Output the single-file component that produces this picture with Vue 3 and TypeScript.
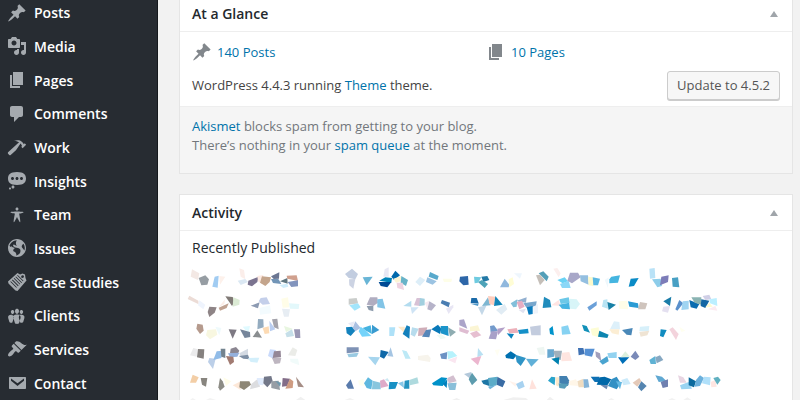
<script setup lang="ts">
interface MenuItem {
  label: string
  icon: string
}

interface ShardGroup {
  x: number
  y: number
  shards: string
}

interface Shard {
  fill: string
  points: string
}

const pin =
  'M10.44 3.02l1.82-1.82 6.36 6.35-1.83 1.82c-1.05-.68-2.48-.57-3.41.36l-.75.75c-.92.93-1.04 2.35-.35 3.41l-1.83 1.82-2.41-2.41-2.8 2.79c-.42.42-3.38 2.71-3.8 2.29s1.86-3.39 2.28-3.81l2.79-2.79L4.1 9.36l1.83-1.82c1.05.69 2.48.57 3.4-.36l.75-.75c.93-.92 1.05-2.35.36-3.41z'
const pages = 'M6 15V2h10v13H6zm-1 1h8v2H3V5h2v11z'

const menu: MenuItem[] = [
  { label: 'Posts', icon: pin },
  {
    label: 'Media',
    icon: 'M13 11V4c0-.55-.45-1-1-1h-1.67L9 1H5L3.67 3H2c-.55 0-1 .45-1 1v7c0 .55.45 1 1 1h10c.55 0 1-.45 1-1zM7 4.5c1.38 0 2.5 1.12 2.5 2.5S8.38 9.5 7 9.5 4.5 8.38 4.5 7 5.62 4.5 7 4.5zM14 6h5v10.5c0 1.38-1.12 2.5-2.5 2.5S14 17.88 14 16.5s1.12-2.5 2.5-2.5c.17 0 .34.02.5.05V9h-3V6zm-4 8.05V13h2v3.5c0 1.38-1.12 2.5-2.5 2.5S7 17.88 7 16.5 8.12 14 9.5 14c.17 0 .34.02.5.05z',
  },
  { label: 'Pages', icon: pages },
  {
    label: 'Comments',
    icon: 'M5 2h9c1.1 0 2 .9 2 2v7c0 1.1-.9 2-2 2h-2l-5 5v-5H5c-1.1 0-2-.9-2-2V4c0-1.1.9-2 2-2z',
  },
  {
    label: 'Work',
    icon: 'M17.7 6.32l1.41 1.42-3.47 3.41-1.42-1.42.84-.82c-.32-.76-.81-1.57-1.51-2.31l-4.61 6.59-5.26 4.7c-.39.39-1.02.39-1.42 0l-1.2-1.21c-.39-.39-.39-1.02 0-1.41l10.97-9.92c-1.37-.86-3.21-1.46-5.67-1.48 2.7-.82 4.95-.93 6.58-.3 1.7.66 2.82 2.2 3.91 3.58z',
  },
  {
    label: 'Insights',
    icon: 'M10 1c7 0 9 2.91 9 6.5S17 14 10 14s-9-2.91-9-6.5S3 1 10 1zM5.5 9C6.33 9 7 8.33 7 7.5S6.33 6 5.5 6 4 6.67 4 7.5 4.67 9 5.5 9zM10 9c.83 0 1.5-.67 1.5-1.5S10.83 6 10 6s-1.5.67-1.5 1.5S9.17 9 10 9zm4.5 0c.83 0 1.5-.67 1.5-1.5S15.33 6 14.5 6 13 6.67 13 7.5 13.67 9 14.5 9zM6 14.5c.83 0 1.5.67 1.5 1.5s-.67 1.5-1.5 1.5-1.5-.67-1.5-1.5.67-1.5 1.5-1.5zm-3 2c.55 0 1 .45 1 1s-.45 1-1 1-1-.45-1-1 .45-1 1-1z',
  },
  {
    label: 'Team',
    icon: 'M10 2.6c.83 0 1.5.67 1.5 1.5s-.67 1.51-1.5 1.51c-.82 0-1.5-.68-1.5-1.51s.68-1.5 1.5-1.5zM3.4 7.36c0-.65 6.6-.76 6.6-.76s6.6.11 6.6.76-4.47 1.4-4.47 1.4 1.69 8.14 1.06 8.38c-.62.24-3.19-5.19-3.19-5.19s-2.56 5.43-3.18 5.19c-.63-.24 1.06-8.38 1.06-8.38S3.4 8.01 3.4 7.36z',
  },
  {
    label: 'Issues',
    icon: 'M10 1C5.03 1 1 5.03 1 10s4.03 9 9 9 9-4.03 9-9-4.03-9-9-9zm3.46 11.95c0 1.47-.8 3.3-4.06 4.7.3-4.17-2.52-3.69-3.2-5 .126-1.1.804-2.063 1.8-2.55-1.552-.266-3-.96-4.18-2 .05.47.28.904.64 1.21-.782-.295-1.458-.817-1.94-1.5.977-3.225 3.883-5.482 7.25-5.63-.84 1.38-1.5 4.13 0 5.57C8.23 8 7.26 6 6.41 6.79c-1.13 1.06.33 2.51 3.42 3.08 3.29.59 3.66 1.58 3.63 3.08zm1.34-4c-.32-1.11.62-2.23 1.69-3.14 1.356 1.955 1.67 4.45.84 6.68-.77-1.89-2.17-2.32-2.53-3.57z',
  },
  {
    label: 'Case Studies',
    icon: 'M1 9.500L10.500 1l2.500 1.500 2.500-1 2.500 1 .5 3.500 1 2.500L10.500 19 8.500 18.500 1.500 11.500zM3.300 9.800l6 6 .6-.6-6-6zM5 8.200l6 6 .6-.6-6-6zM6.700 6.600l6 6 .6-.6-6-6zM8.400 5l6 6 .6-.6-6-6zM10.100 3.500l5.800 5.800.6-.6-5.800-5.800zM15.500 3.200a1.400 1.400 0 1 0 .1 2.800 1.400 1.400 0 0 0-.1-2.800z',
  },
  {
    label: 'Clients',
    icon: 'M8.03 4.46c-.29 1.28.55 3.46 1.97 3.46 1.41 0 2.25-2.18 1.96-3.46-.22-.98-1.08-1.63-1.96-1.63-.89 0-1.74.65-1.97 1.63zm-4.13.9c-.25 1.08.47 2.93 1.67 2.93s1.92-1.85 1.67-2.93c-.19-.83-.92-1.39-1.67-1.39s-1.48.56-1.67 1.39zm8.86 0c-.25 1.08.47 2.93 1.66 2.93 1.2 0 1.92-1.85 1.67-2.93-.19-.83-.92-1.39-1.67-1.39-.74 0-1.47.56-1.66 1.39zm-.59 11.43l1.25-4.3C14.2 10 12.71 8.47 10 8.47c-2.72 0-4.21 1.53-3.44 4.02l1.26 4.3C8.05 17.51 9 18 10 18c.98 0 1.94-.49 2.17-1.21zm-6.1-7.63c.49.67.96 1.83.42 3.59l-1.12 3.79c-.34.2-.77.31-1.2.31-.85 0-1.65-.41-1.85-1.03l-1.07-3.65c-.65-2.11.61-3.4 2.92-3.4.27 0 .54.02.79.06-.1.1-.2.22-.3.33zm8.35-.39c2.31 0 3.58 1.29 2.92 3.4l-1.07 3.65c-.2.62-1 1.03-1.85 1.03-.43 0-.86-.11-1.2-.31l-1.11-3.77c-.55-1.78-.08-2.94.42-3.61-.1-.11-.2-.23-.3-.33.25-.04.51-.06.79-.06z',
  },
  {
    label: 'Services',
    icon: 'M14.48 11.06L7.41 3.99l1.5-1.5c.5-.56 2.3-.47 3.51.32 1.21.8 1.43 1.28 2.91 2.1 1.18.64 2.45 1.26 4.45.85zm-.71.71L6.7 4.7 4.93 6.47c-.39.39-.39 1.02 0 1.41l1.06 1.06c.39.39.39 1.03 0 1.42-.6.6-1.43 1.11-2.21 1.69-.35.26-.7.53-1.01.84C1.43 14.23.4 16.08 1.4 17.07c.99 1 2.84-.03 4.18-1.36.31-.31.58-.66.85-1.02.57-.78 1.08-1.61 1.69-2.21.39-.39 1.02-.39 1.41 0l1.06 1.06c.39.39 1.02.39 1.41 0z',
  },
  {
    label: 'Contact',
    icon: 'M3 4h15c.6 0 1 .4 1 1v10c0 .6-.4 1-1 1H3c-.6 0-1-.4-1-1V5c0-.6.4-1 1-1zM4 5.500v2.200l6.500 5.300L17 7.700V5.500l-6.500 4.800z',
  },
]

// Mosaic of the recent posts: each line is a fill and the corners of one shard,
// in thirds of a pixel from the origin of its group.
const groups: ShardGroup[] = [
  {
    x: 170,
    y: 160,
    shards: `#f3e8e4 66,328 88,340 84,360 62,350
#969da3 86,354 106,346 117,358 112,374 94,376
#a1ccf2 134,350 146,347 143,383 127,380
#fdf1eb 148,348 166,350 150,374
#fbeeea 208,325 222,330 226,358 212,350
#dbe8f3 203,362 226,357 234,366 212,375
#7b7490 235,362 266,350 262,366 246,379 233,374
#fdeae2 262,348 280,345 276,372 264,364
#c4a58c 276,349 303,352 299,366 286,378 270,368
#6b7692 303,349 328,337 327,356 311,357
#7295b7 303,357 325,357 334,372 309,369
#607680 330,364 352,354 353,371
#d0edfb 328,375 352,371 355,380 340,384
#d0a08e 350,347 380,346 384,363 352,356
#8294bd 353,366 384,361 384,379 364,381
#ecdcd6 58,407 85,422 86,433 53,417
#eff4fd 88,421 106,434 100,448 84,436
#8e8486 118,440 140,442 134,458 118,471 113,456
#fceee8 165,418 163,433 147,440
#c0a291 146,443 176,430 170,444 150,452
#807a76 166,409 188,411 194,427 186,438
#dcebd5 190,412 209,420 208,434 188,440
#8c9ab2 242,437 269,427 264,445
#c4cfea 272,414 290,412 300,432 278,434 266,424
#f3fbfe 268,444 300,436 304,460 270,464
#fffde8 334,416 354,412 358,442 338,443
#e3f8fb 357,430 388,432 386,447 360,446
#e7edf3 336,446 360,448 356,470 342,470
#b59a8d 82,491 98,494 101,512 90,522 79,506
#f8f7e0 112,510 138,508 142,524 120,538 108,526
#effafc 136,500 154,504 148,526
#7d7983 176,508 200,509 188,536
#e0faff 218,500 240,498 236,516 226,510
#76869b 210,508 240,516 241,531 224,534
#8a8e90 262,511 276,533 248,531
#94acc0 264,477 280,478 281,502 262,508
#fddbb4 278,504 296,499 298,520 284,522
#b9cdf0 298,482 316,508 300,514
#a4a3ab 306,478 322,476 326,508 312,502
#e8f6e0 342,498 368,506 348,516
#c6dfe9 346,520 366,508 372,528 350,532
#9a97b4 372,508 390,508 391,534 376,534
#ebebec 70,564 84,568 80,590 60,586
#85817f 84,567 103,568 101,596 81,592
#bccfe8 118,594 137,596 129,627 114,606
#91bce8 140,574 158,572 154,594 130,600
#73838f 152,566 166,566 166,594 154,590
#8b8691 182,566 198,561 208,572 202,584 180,580
#94b0dc 174,580 208,578 202,590 180,592
#a17b72 168,588 190,590 192,606 180,615
#d3dae3 208,580 234,566 234,584 212,588
#7d8fa5 206,588 234,584 239,598 220,596
#d3effb 234,594 268,593 262,608 242,606
#c9dafb 300,568 318,570 310,596 294,588
#948797 312,574 332,572 333,592 308,594
#beb6c0 306,594 334,594 330,610 314,612
#ebece8 354,586 368,562 382,570 376,588
#f1fbfa 360,596 384,596 388,616 362,606
#f3cea6 68,644 86,652 78,668 60,668
#88857f 92,654 112,654 108,680 96,674
#8d8c85 150,654 158,664 164,680 150,692 145,682
#fffde9 160,652 184,664 168,678
#fde8d8 188,676 212,664 212,690
#8e8776 210,664 238,664 243,674 222,690 208,682
#dcdde0 244,672 264,656 270,680 240,688
#e0ebfc 260,654 282,654 280,676 266,674
#737889 282,650 304,648 308,664 292,682 280,670
#969da5 304,664 326,662 330,690 304,684
#6f98ac 316,662 333,668 330,680
#836d88 338,654 360,656 352,678 336,680
#cf9c82 360,656 370,664 368,684 346,686
#a58d85 378,650 402,682 384,680
#f3f3f3 60,720 68,714 78,720
#f3f3f3 108,720 120,714 138,720
#f0f0f0 378,720 392,710 406,720`,
  },
  {
    x: 340,
    y: 260,
    shards: `#c2cde0 15,42 36,26 54,42 46,58 26,54
#ccd3e3 27,58 46,57 40,86 28,76
#69b5d6 68,52 98,50 80,76
#e8e8f4 134,28 146,22 146,50 130,50
#0083b8 118,62 136,52 156,54 154,68
#004a94 116,66 154,66 142,82 122,78
#0069ac 154,50 166,32 180,46 162,60
#fdf5d4 160,56 184,48 182,64 168,68
#68b3c8 184,48 204,60 198,78 182,68
#eed3e0 170,68 188,68 192,90 172,84
#ddeef8 226,66 240,50 256,60 240,78
#58a9cc 270,36 296,48 292,60 266,50
#9bc3e2 262,52 290,64 278,74 258,66
#fefee8 308,56 336,56 334,66 312,66
#2d66a8 360,50 384,48 386,74 370,76 358,64
#e0ecf4 32,122 54,124 48,142
#cacdcb 26,116 50,114 54,130 26,134
#a2e5fb 28,136 54,130 62,142 44,152
#b0adc0 90,112 112,112 114,128 100,138 80,134
#8e9cad 80,138 100,138 100,154 86,150
#82c4e6 112,118 128,116 136,146 112,142
#b3dcef 190,138 214,122 214,140
#cfe4f5 212,142 236,142 216,162
#d7c1d5 230,114 240,114 240,138 222,136
#a2cfdf 240,114 254,116 254,136 238,138
#f6eaf2 254,128 268,122 262,146
#b6b3c9 268,124 288,136 274,152 262,148
#4a7db2 306,120 330,128 326,142 302,130
#e8e6f4 318,146 340,134 340,142 326,162
#1482bd 18,202 36,200 46,212 32,228 20,220
#e8eaf6 24,190 44,184 38,202
#abc0e2 46,184 62,204 46,214 38,204
#74d3fa 62,200 78,212 94,228 66,230 56,214
#46b3e0 68,204 92,196 96,222 78,212
#399bd0 96,194 118,210 96,222
#aee1f8 148,202 166,202 162,228 148,228
#fde9cb 174,200 194,200 196,222
#1480bc 200,196 210,200 208,236 188,222
#b7dced 216,202 236,206 224,230 212,224
#cfadb8 236,204 262,202 256,226 234,228
#5686b9 258,210 274,208 268,232 246,230
#0878b8 274,208 294,194 304,206 300,222
#1b94ca 302,198 324,198 326,228 302,220
#8eacb1 324,202 348,216 330,230
#eefaf4 290,226 304,222 318,234 302,238
#aba4c9 358,180 372,178 382,206 358,196
#dfbdd2 358,202 388,212 382,222 358,214
#7e92b5 20,262 56,262 56,276 20,280
#9acae2 22,282 56,278 50,290 26,292
#a6d5ee 84,290 120,292 106,316
#0e68a8 122,270 146,276 132,296 120,290
#a5c5e3 152,262 160,290 142,288
#bde9f6 186,270 200,274 212,296 196,296
#f7f4ec 234,288 264,284 272,294 270,306 234,300
#6c92c4 300,282 322,276 320,298 304,296
#b6f2fc 322,274 338,274 352,288 324,298
#fae6f0 324,300 352,290 346,310
#5a7bac 18,376 32,358 42,386 24,386
#fffff0 54,362 70,356 74,378 58,376
#5fb8df 72,370 84,352 98,362 94,388 80,384
#88c6de 98,362 122,368 122,388 96,388
#deaac9 120,362 132,358 146,378 122,384
#cbe8f2 134,360 142,354 150,366
#1890c4 148,366 174,366 166,386 146,388
#86c7e8 174,370 190,364 192,384
#2493c0 194,362 208,360 208,386 192,386
#aedade 208,360 232,352 236,370 210,376
#0091c9 276,370 304,352 322,354 308,378 280,376
#d3bfcf 322,354 340,346 350,364 326,370
#0080bd 308,372 322,358 320,384
#8abfd9 322,370 350,368 346,390 328,390
#b3c8da 372,342 394,336 396,360
#5d9cae 386,358 396,338 412,360 396,376
#f2f2f2 14,420 30,414 44,420
#f0f0f0 336,420 350,414 362,420`,
  },
  {
    x: 470,
    y: 260,
    shards: `#6fcbe0 12,50 34,52 24,68 14,70
#2379a6 34,50 52,48 58,60 40,66
#4ea3b8 24,66 36,60 54,72 44,84
#90b8dd 104,56 118,74 116,82 90,82
#fffdd5 116,58 128,52 132,72 118,82
#eef6fd 132,40 156,40 150,56
#539fb8 206,40 220,34 236,50 230,64
#c5bfb9 198,46 210,44 224,60 210,76
#fcefee 250,26 262,24 272,40 266,52
#69d2f4 262,60 284,52 294,64 278,70
#8bd7f7 270,72 296,62 302,84 276,84
#a8a7c8 300,38 324,38 332,52 306,70 292,62
#94bfe0 330,46 354,46 356,74 332,64
#fdfacc 354,50 368,52 370,78 356,76
#5bb8e3 368,52 390,56 384,76 370,76
#1b6aa8 4,114 20,114 26,130 2,130
#5098c8 4,132 26,130 24,138
#c4d8e8 24,142 50,136 36,166
#7eb7d2 36,138 54,112 62,136
#ffcdbd 54,108 76,110 72,136 58,132
#1285b8 76,108 98,134 72,138
#e1ecf4 78,150 104,132 112,148 94,164
#83bfda 122,130 142,118 140,140 130,142
#92b0d0 140,122 170,112 168,128 148,126
#e6adc2 140,126 156,122 164,140 148,148
#78a7cd 160,130 200,124 198,138 170,144
#0a7cbe 170,142 188,138 188,162 176,164
#e0e2f0 146,150 168,146 160,160
#eef3fa 190,140 204,132 204,160 190,162
#208cbc 222,110 240,120 244,142 218,144
#ffe4e2 244,136 266,120 272,138
#6cc8e8 268,118 296,112 300,128 272,132
#45b4e2 266,134 298,128 300,148 276,146
#d8f5f8 298,116 320,118 330,132 318,148 300,146
#6ba0d8 352,142 380,124 380,136 358,152
#fbf5d4 0,200 24,196 30,212 0,214
#e6bfd0 0,220 20,212 34,226 12,234
#739acb 60,198 72,196 84,212 62,218
#a8a0c8 64,214 84,214 78,238 56,236
#b3a0c8 82,206 106,202 84,226
#ecb0ba 112,208 140,204 146,218 118,220
#0a82bd 110,220 132,222 124,236
#1490c8 144,210 174,206 176,220 148,222
#c3ccde 180,200 212,196 212,226 184,226
#0093cb 238,206 248,198 252,226 240,222
#86d2f2 274,200 294,196 302,222 276,224
#1290b8 336,194 350,198 360,218 342,212
#fdfdd5 362,206 386,202 388,232 366,226
#0d85b0 388,212 416,224 412,234 384,230
#b8e0f2 24,264 40,284 22,292
#ecb6cf 2,296 34,288 24,316
#fffef2 74,270 90,268 82,288
#0070b0 106,286 122,274 140,286 130,298 108,294
#2f94c6 136,284 168,294 152,318 140,306
#60b0d8 168,296 206,298 184,320
#eef6f2 200,264 222,260 226,284 208,284
#68a8d0 232,268 252,268 252,290 232,294
#a0b0bc 250,272 276,272 272,300 256,296
#0081af 244,296 268,292 266,314
#fee5e0 276,278 298,276 306,302 274,304
#3f72b4 324,264 340,264 344,282 326,286
#5590d4 344,266 374,266 366,290 344,286
#a29fbc 376,274 390,280 394,304 378,290
#4aa4d0 388,304 412,288 416,304 398,314
#1c76a5 34,362 60,356 58,378 40,372
#5cacc8 54,354 82,350 80,376 58,380
#3a6ca4 82,350 106,364 98,382 80,374
#6eb2d8 54,380 78,376 60,388
#fff3ec 116,362 140,370 136,380
#a8d2f0 138,372 158,362 164,380 146,388
#ffe2dc 178,388 186,358 200,386
#2aa4cc 234,362 244,350 256,352 254,376
#fde8c8 256,352 268,352 266,380 258,376
#4280b0 268,348 290,348 298,362 294,378 268,370
#569cb8 266,370 296,372 284,386 268,384
#fff6e8 296,364 318,358 326,378 300,376
#f0dcc0 322,364 340,356 342,382 326,382
#86b4d8 340,358 354,358 358,382 342,384
#0d70b4 362,350 388,350 394,366 374,366
#f0f0f0 100,420 130,412 168,414 174,420
#f0f0f0 230,420 240,410 252,420`,
  },
  {
    x: 600,
    y: 260,
    shards: `#45b5e0 28,58 34,50 60,46 54,68 28,70
#eff8fc 14,60 26,52 24,84
#0a8bc6 92,56 116,54 102,78 86,80
#b9e2f7 148,26 164,24 166,54 150,56
#8dcdea 156,58 182,56 186,78 172,82
#7c7cb8 184,50 206,46 204,66 180,76
#48a0c4 216,54 234,52 238,82 218,80
#b8e4f4 10,120 22,118 24,146 6,140
#1880a6 22,126 48,134 26,150
#fffde8 56,124 82,122 84,148 58,146
#2a9bd4 84,124 114,130 116,144 88,140
#cfc4bd 120,126 142,130 136,148 114,148
#1a7ca8 214,110 210,138 190,124
#e4e0f0 190,140 210,138 204,158 186,154
#5a90cc 226,148 238,120 250,130 232,152
#9fd4f2 248,124 266,122 266,148 244,150
#0a6cb0 268,120 298,132 290,146 272,142
#8ab3b2 274,112 304,112 304,134 284,128
#1467a4 304,118 328,122 316,144 302,138
#d0cfe6 308,108 328,104 334,118 316,120
#bcefff 328,118 350,114 352,138 330,130
#fffad0 316,142 328,128 338,140
#fbeaf0 324,148 346,138 352,152
#ddf0fa 42,184 58,186 60,208 30,208
#fceed4 28,208 58,208 56,224 36,220
#4a88b8 66,210 98,204 94,226 80,224
#d7f0fa 120,200 148,198 146,214 118,214
#efe4d4 118,216 148,212 142,226 122,230
#118cc0 182,208 200,210 190,232 180,228
#f3d3dc 208,208 218,202 236,222 228,240
#fffff0 238,200 256,212 244,216
#92d2f0 22,280 50,276 50,294 26,294
#006fb8 54,292 88,292 68,312
#dcf0de 76,274 90,290 62,292
#7a8ab8 92,290 106,272 118,290 106,300
#5fb2d4 148,300 166,288 168,312 152,312
#86a8c2 166,292 180,286 190,300 170,310
#0068a8 0,352 14,350 34,358 22,376 -10,374
#3290c4 34,358 50,350 62,370 50,388 24,378
#6a88b0 0,374 24,376 20,388
#63b8e2 48,364 66,366 60,388
#cbeafa 64,360 82,354 92,372 70,376
#e4c9b8 98,368 118,354 124,364 112,380
#5585b0 124,364 140,378 124,394 114,382
#60a8d2 166,346 186,350 200,364 176,366
#6f80b0 182,366 204,358 204,380 188,384
#e8d5e2 234,346 250,352 260,368 240,368
#9ad4f2 240,376 266,366 276,386 244,388
#0b6a9e 266,352 288,364 282,382 266,376
#6bb0dc 288,360 300,346 312,354 300,378 284,380
#b0e0fa 312,350 332,352 330,376 306,370
#ffe6e2 332,366 346,360 350,380 334,382
#60b0c0 340,354 354,350 362,360 352,374
#f2f2f2 24,420 34,414 44,420
#f2f2f2 204,420 216,414 228,420
#f2f2f2 250,420 262,412 274,420`,
  },
]

const parseShards = (source: string): Shard[] =>
  source.split('\n').map((line) => {
    const [fill, ...corners] = line.split(' ')
    return { fill, points: corners.join(' ') }
  })

const mosaic = groups.map((group) => ({
  transform: `translate(${group.x} ${group.y}) scale(${1 / 3})`,
  shards: parseShards(group.shards),
}))
</script>

<template>
  <div class="admin">
    <nav class="sidebar">
      <a v-for="item in menu" :key="item.label" class="menu-item" href="#">
        <svg class="icon" viewBox="0 0 20 20" aria-hidden="true">
          <path :d="item.icon" fill-rule="evenodd" />
        </svg>
        <span>{{ item.label }}</span>
      </a>
    </nav>

    <main class="content">
      <section class="card glance">
        <header class="card-head">
          <h2>At a Glance</h2>
          <button class="toggle" type="button" aria-label="Toggle At a Glance">
            <svg viewBox="0 0 8 6" aria-hidden="true"><path d="M4 0l4 6H0z" /></svg>
          </button>
        </header>
        <div class="counts">
          <a class="count" href="#">
            <svg class="icon" viewBox="0 0 20 20" aria-hidden="true"><path :d="pin" /></svg>
            <span>140 Posts</span>
          </a>
          <a class="count" href="#">
            <svg class="icon" viewBox="0 0 20 20" aria-hidden="true"><path :d="pages" /></svg>
            <span>10 Pages</span>
          </a>
        </div>
        <div class="version">
          <p>WordPress 4.4.3 running <a href="#">Theme</a> theme.</p>
          <button class="update" type="button">Update to 4.5.2</button>
        </div>
        <div class="spam">
          <p><a href="#">Akismet</a> blocks spam from getting to your blog.</p>
          <p>There’s nothing in your <a href="#">spam queue</a> at the moment.</p>
        </div>
      </section>

      <section class="card activity">
        <header class="card-head">
          <h2>Activity</h2>
          <button class="toggle" type="button" aria-label="Toggle Activity">
            <svg viewBox="0 0 8 6" aria-hidden="true"><path d="M4 0l4 6H0z" /></svg>
          </button>
        </header>
        <h3>Recently Published</h3>
        <svg class="mosaic" viewBox="180 262 560 138" aria-hidden="true">
          <g v-for="(group, g) in mosaic" :key="g" :transform="group.transform">
            <polygon v-for="(shard, s) in group.shards" :key="s" :points="shard.points" :fill="shard.fill" />
          </g>
        </svg>
      </section>
    </main>
  </div>
</template>

<style>
body {
  background: #f2f2f2;
}
</style>

<style scoped>
.admin {
  display: flex;
  height: 100vh;
  overflow: hidden;
  font: 13px/19px 'Open Sans', sans-serif;
  color: #444;
}

a {
  color: #0073aa;
  text-decoration: none;
}

h2,
h3,
p {
  margin: 0;
}

.icon {
  flex: none;
  width: 20px;
  height: 20px;
}

/* The menu is scrolled slightly, so its first row starts above the window. */
.sidebar {
  display: grid;
  grid-auto-rows: 1fr;
  flex: none;
  box-sizing: border-box;
  width: 158px;
  height: calc(100vh + 4px);
  margin-top: -4px;
  border-right: 1px solid #15191d;
  background: #272c32;
}

.menu-item {
  display: flex;
  align-items: center;
  gap: 7px;
  padding-left: 7px;
  font-size: 14px;
  font-weight: 600;
  color: #fff;
}

.menu-item .icon {
  fill: #a5aaaf;
}

.content {
  display: flex;
  flex: 1;
  flex-direction: column;
  gap: 20px;
  min-width: 0;
  padding: 0 7px 0 21px;
}

.card {
  border: 1px solid #e5e5e5;
  background: #fff;
}

.glance {
  margin-top: -5px;
}

.activity {
  flex: 1;
  border-bottom: 0;
}

.card-head {
  display: flex;
  align-items: center;
  justify-content: space-between;
  height: 35px;
  padding: 0 12px;
  border-bottom: 1px solid #eee;
}

h2 {
  font-size: 14px;
  font-weight: 600;
  color: #23282d;
}

.toggle {
  display: flex;
  padding: 2px;
  border: 0;
  background: none;
}

.toggle svg {
  width: 8px;
  height: 6px;
  fill: #a0a5aa;
}

.counts {
  display: grid;
  grid-template-columns: 1fr 1fr;
  padding: 10px 12px 0;
}

.count {
  display: flex;
  align-items: center;
  gap: 5px;
}

.count .icon {
  fill: #82878c;
}

.version {
  display: flex;
  align-items: center;
  justify-content: space-between;
  padding: 9px 12px 6px;
}

.update {
  height: 29px;
  padding: 0 9px;
  border: 1px solid #ccc;
  border-radius: 3px;
  background: #f7f7f7;
  box-shadow: 0 1px 0 #ccc;
  font: inherit;
  color: #555;
}

.spam {
  padding: 10px 12px 18px;
  border-top: 1px solid #eee;
  background: #f5f5f5;
  color: #72777c;
}

h3 {
  padding: 7px 12px 5px;
  font-size: 14px;
  font-weight: 400;
  color: #23282d;
}

.mosaic {
  display: block;
  width: 560px;
  height: 138px;
}
</style>
